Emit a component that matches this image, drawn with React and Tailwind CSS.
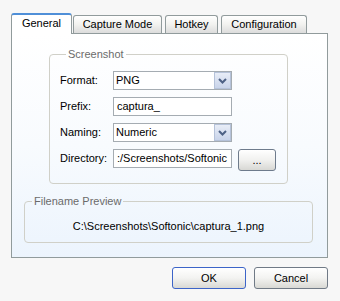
import React from 'react';

const font = { fontFamily: '"Liberation Sans", Arial, sans-serif' };

function Tab({ label, active, width }) {
  if (active) {
    return (
      <div
        className={`${width} h-[21px] -mb-px relative z-10 bg-white border border-b-0 border-[#919b9c] rounded-t-[3px] border-t-[2px] border-t-[#4f8fd8] flex items-center justify-center text-[11px] text-black`}
      >
        <span className="-mt-[2px]">{label}</span>
      </div>
    );
  }
  return (
    <div
      className={`${width} h-[18px] bg-gradient-to-b from-white via-[#f2f2ef] to-[#dcdcdc] border border-b-0 border-[#919b9c] rounded-t-[3px] flex items-center justify-center text-[11px] text-black`}
    >
      {label}
    </div>
  );
}

function Combo({ value }) {
  return (
    <div className="w-[119px] h-[19px] border border-[#a5acb2] bg-white flex items-center">
      <span className="flex-1 pl-[2px] text-[11px] leading-none">{value}</span>
      <div className="w-[17px] h-[17px] border border-[#b5c2d9] bg-gradient-to-b from-[#e8edf7] to-[#c9d4ea] flex items-center justify-center">
        <svg width="9" height="6" viewBox="0 0 9 6">
          <path d="M1 1 L4.5 4.5 L8 1" fill="none" stroke="#4d6185" strokeWidth="2" />
        </svg>
      </div>
    </div>
  );
}

function Field({ value }) {
  return (
    <div className="w-[119px] h-[19px] border border-[#a5acb2] bg-white flex items-center overflow-hidden">
      <span className="pl-[3px] text-[11px] leading-none whitespace-nowrap">{value}</span>
    </div>
  );
}

function Row({ label, children }) {
  return (
    <div className="flex items-center h-[19px]">
      <span className="w-[53px] text-[11px] text-black">{label}</span>
      {children}
    </div>
  );
}

function Button({ label, primary }) {
  return (
    <button
      className={`w-[74px] h-[22px] rounded-[3px] border ${primary ? 'border-[#3c64c8]' : 'border-[#707a86]'} bg-gradient-to-b from-white via-[#f3f3f1] to-[#d9d9d4] text-[11px] text-black flex items-center justify-center`}
    >
      {label}
    </button>
  );
}

export default function App() {
  return (
    <div className="w-[340px] h-[301px] bg-[#f7f7f7] pt-[12px] pl-[11px] text-black" style={font}>
      <div className="flex items-end gap-[1px] h-[21px]">
        <Tab label="General" active width="w-[61px]" />
        <Tab label="Capture Mode" width="w-[89px]" />
        <div className="w-[1px]" />
        <Tab label="Hotkey" width="w-[53px]" />
        <div className="w-[1px]" />
        <Tab label="Configuration" width="w-[86px]" />
      </div>
      <div className="w-[317px] h-[225px] border border-[#919b9c] bg-gradient-to-b from-white via-[#f8fbfe] to-[#ecf4fd] pt-[14px]">
        <fieldset className="ml-[37px] w-[239px] h-[136px] border border-[#d0d0c8] rounded-[4px] pl-[10px] pt-[10px]">
          <legend className="ml-[6px] px-[2px] text-[11px] leading-[13px] text-[#6b6b6b]">Screenshot</legend>
          <div className="flex flex-col gap-[7px]">
            <Row label="Format:"><Combo value="PNG" /></Row>
            <Row label="Prefix:"><Field value="captura_" /></Row>
            <Row label="Naming:"><Combo value="Numeric" /></Row>
            <Row label="Directory:">
              <Field value=":/Screenshots/Softonic" />
              <button className="ml-[6px] mt-[3px] w-[38px] h-[22px] rounded-[3px] border border-[#6e7b8c] bg-gradient-to-b from-white via-[#f1f1ef] to-[#d8d8d4] text-[11px] leading-none flex items-center justify-center">
                ...
              </button>
            </Row>
          </div>
        </fieldset>
        <fieldset className="ml-[12px] mt-[11px] w-[289px] h-[48px] border border-[#d0d0c8] rounded-[4px] flex">
          <legend className="ml-[7px] px-[2px] text-[11px] leading-[13px] text-[#6b6b6b]">Filename Preview</legend>
          <div className="w-full text-center text-[11px] pt-[10px]">C:\Screenshots\Softonic\captura_1.png</div>
        </fieldset>
      </div>
      <div className="flex justify-end gap-[8px] w-[317px] mt-[9px]">
        <Button label="OK" primary />
        <Button label="Cancel" />
      </div>
    </div>
  );
}
